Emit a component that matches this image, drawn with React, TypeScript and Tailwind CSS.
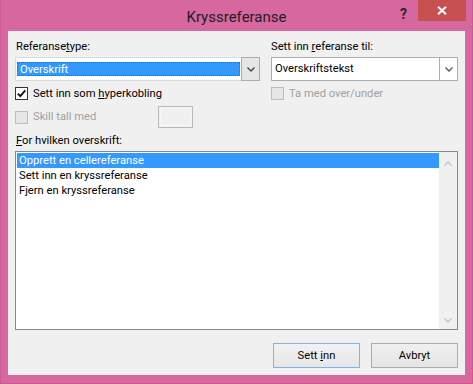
import React from "react";

const font = { fontFamily: "Roboto, 'Noto Sans', sans-serif" };

function Chevron({ color = "#404040", up = false }: { color?: string; up?: boolean }) {
  return (
    <svg width="8" height="5" viewBox="0 0 8 5" className="block">
      <polyline
        points={up ? "0.5,4.5 4,1 7.5,4.5" : "0.5,0.5 4,4 7.5,0.5"}
        fill="none"
        stroke={color}
        strokeWidth="1.3"
      />
    </svg>
  );
}

function CheckBox({ checked, disabled }: { checked?: boolean; disabled?: boolean }) {
  if (disabled) {
    return <div className="h-[13px] w-[13px] shrink-0 border border-[#bcbcbc] bg-[#e6e6e6]" />;
  }
  return (
    <div className="flex h-[13px] w-[13px] shrink-0 items-center justify-center border border-[#333333] bg-white">
      {checked && (
        <svg width="11" height="11" viewBox="0 0 11 11">
          <path d="M1.8 5.6 L4.3 8.2 L9.3 2.3" fill="none" stroke="#111" strokeWidth="1.9" />
        </svg>
      )}
    </div>
  );
}

export default function App() {
  return (
    <div
      className="flex h-[384px] w-[473px] flex-col border-x border-b border-[#c65c93] bg-[#d6679f] text-[11.2px] leading-[16px] text-black"
      style={font}
    >
      {/* title bar */}
      <div className="grid h-[31px] grid-cols-[1fr_auto_1fr]">
        <div />
        <div className="pt-[7px] text-[15px] leading-[20px] text-[#1e1e1e]">Kryssreferanse</div>
        <div className="flex items-start justify-end pr-[6px]">
          <span className="mr-[11px] mt-[5px] text-[14px] font-bold leading-[18px] text-[#2a2a2a]">?</span>
          <div className="flex h-[21px] w-[48px] items-center justify-center bg-[#c75050]">
            <svg width="10" height="9" viewBox="0 0 10 9">
              <path d="M1 0.8 L9 8.2 M9 0.8 L1 8.2" stroke="#fff" strokeWidth="2" />
            </svg>
          </div>
        </div>
      </div>

      {/* client area */}
      <div className="ml-[7px] h-[344px] w-[457px] bg-[#f0f0f0] pl-[7px] pt-[8px]">
        <div className="grid grid-cols-[245px_187px] gap-x-[11px]">
          <div>
            <div className="pl-[1px]">
              Referanse<span className="underline">t</span>ype:
            </div>
            <div className="mt-[2px] flex h-[24px]">
              <div className="flex-1 border-y border-l border-[#dadada] bg-white px-[1px] py-[4px]">
                <div className="h-full border border-dotted border-[#1f6fc5] bg-[#3399ff] pl-[2px] leading-[13px] text-white">
                  Overskrift
                </div>
              </div>
              <div className="flex w-[19px] items-center justify-center border border-[#acacac] bg-[#e6e6e6]">
                <Chevron />
              </div>
            </div>
            <div className="mt-[6px] flex h-[13px] items-center gap-[5px]">
              <CheckBox checked />
              <span>
                Sett inn som <span className="underline">h</span>yperkobling
              </span>
            </div>
            <div className="mt-[6px] flex h-[22px] items-center">
              <CheckBox disabled />
              <span className="ml-[5px] w-[125px] text-[#a0a0a0]">Skill tall med</span>
              <div className="h-[22px] w-[35px] border border-[#b9b9b9] bg-[#f0f0f0] p-[1px]">
                <div className="h-full w-full border border-[#f8f8f8]" />
              </div>
            </div>
          </div>

          <div>
            <div>
              Sett inn <span className="underline">r</span>eferanse til:
            </div>
            <div className="mt-[2px] flex h-[24px] border border-[#acacac] bg-white">
              <div className="flex-1 pl-[3px] leading-[22px]">Overskriftstekst</div>
              <div className="flex w-[18px] items-center justify-center border-l border-[#acacac]">
                <Chevron color="#555" />
              </div>
            </div>
            <div className="mt-[6px] flex h-[13px] items-center gap-[5px]">
              <CheckBox disabled />
              <span className="text-[#a0a0a0]">Ta med over/under</span>
            </div>
          </div>
        </div>

        <div className="mt-[5px] pl-[1px]">
          <span className="underline">F</span>or hvilken overskrift:
        </div>
        <div className="mt-[2px] flex h-[179px] w-[443px] border border-[#828790] bg-white">
          <div className="flex-1 pl-[1px] pt-[1px]">
            <div className="h-[15px] bg-[#3399ff] pl-[2px] leading-[15px] text-white">Opprett en cellereferanse</div>
            <div className="h-[15px] pl-[2px] leading-[15px]">Sett inn en kryssreferanse</div>
            <div className="h-[15px] pl-[2px] leading-[15px]">Fjern en kryssreferanse</div>
          </div>
          <div className="flex w-[18px] flex-col justify-between bg-[#f0f0f0] pb-[6px] pt-[9px]">
            <div className="flex justify-center">
              <Chevron up color="#c2c2c2" />
            </div>
            <div className="flex justify-center">
              <Chevron color="#c2c2c2" />
            </div>
          </div>
        </div>

        <div className="mt-[13px] flex w-[443px] justify-end gap-[11px]">
          <div className="flex h-[25px] w-[87px] items-center justify-center border border-[#7eb4ea] bg-gradient-to-b from-[#f2f2f2] to-[#e6e6e6]">
            <span>
              Sett <span className="underline">i</span>nn
            </span>
          </div>
          <div className="flex h-[25px] w-[87px] items-center justify-center border border-[#acacac] bg-gradient-to-b from-[#f0f0f0] to-[#e5e5e5]">
            Avbryt
          </div>
        </div>
      </div>
    </div>
  );
}
